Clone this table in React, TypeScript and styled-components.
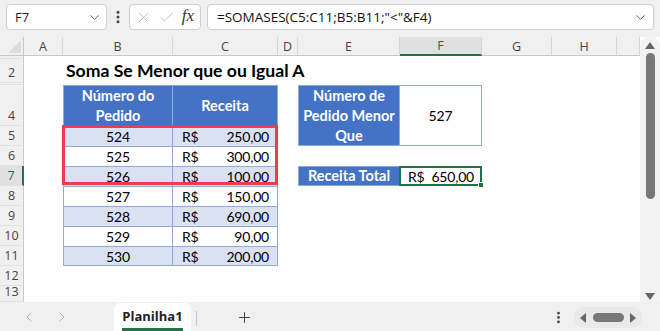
import React from "react";
import styled, { createGlobalStyle } from "styled-components";
import { Check, ChevronDown, ChevronLeft, ChevronRight, EllipsisVertical, Plus, X } from "lucide-react";

const GlobalStyle = createGlobalStyle`
  html, body {
    margin: 0;
    padding: 0;
    background: #f0f0f0;
  }
  * {
    box-sizing: border-box;
  }
`;

const UI_FONT = `"Open Sans", "Noto Sans", Arial, sans-serif`;
const CELL_FONT = `Lato, "Liberation Sans", Arial, sans-serif`;

const columns = ["A", "B", "C", "D", "E", "F", "G", "H", ""];
const rowNumbers = [1, 2, 3, 4, 5, 6, 7, 8, 9, 10, 11, 12, 13];
// rows 1 and 3 are too short to show their number
const tinyRows = [1, 3];

const orders = [
  { id: 524, value: "250,00" },
  { id: 525, value: "300,00" },
  { id: 526, value: "100,00" },
  { id: 527, value: "150,00" },
  { id: 528, value: "690,00" },
  { id: 529, value: "90,00" },
  { id: 530, value: "200,00" },
];

// sheet row n sits on grid row n + 1 (grid row 1 is the column header)
const gridRow = (n: number) => n + 1;

const App = () => {
  return (
    <Page>
      <GlobalStyle />

      <FormulaBar>
        <NameBox>
          <span>F7</span>
          <ChevronDown size={15} strokeWidth={1.5} color="#555" />
        </NameBox>
        <Kebab>
          <EllipsisVertical size={16} strokeWidth={2.5} color="#444" />
        </Kebab>
        <FnButtons>
          <X size={17} strokeWidth={1.2} color="#b4b4b4" />
          <Check size={17} strokeWidth={1.2} color="#b4b4b4" />
          <Fx>fx</Fx>
        </FnButtons>
        <FormulaInput>
          <span>=SOMASES(C5:C11;B5:B11;"&lt;"&amp;F4)</span>
          <ChevronDown size={15} strokeWidth={1.5} color="#555" />
        </FormulaInput>
      </FormulaBar>

      <SheetArea>
        <Grid>
          <Corner>
            <CornerMark />
          </Corner>
          {columns.map((c, i) => (
            <ColHeader key={i} $col={i + 2} $active={c === "F"}>
              {c}
            </ColHeader>
          ))}
          {rowNumbers.map((n) => (
            <RowHeader key={n} $row={gridRow(n)} $active={n === 7}>
              {tinyRows.includes(n) ? null : n}
            </RowHeader>
          ))}

          <Title $row={gridRow(2)}>Soma Se Menor que ou Igual A</Title>

          <HeadCell $col={3} $row={gridRow(4)} $first>
            Número do
            <br />
            Pedido
          </HeadCell>
          <HeadCell $col={4} $row={gridRow(4)}>
            Receita
          </HeadCell>

          {orders.map((o, i) => {
            const row = gridRow(5 + i);
            const shaded = i % 2 === 0;
            const last = i === orders.length - 1;
            return (
              <React.Fragment key={o.id}>
                <DataCell $col={3} $row={row} $shaded={shaded} $last={last} $first $center>
                  {o.id}
                </DataCell>
                <DataCell $col={4} $row={row} $shaded={shaded} $last={last}>
                  <Currency>R$</Currency>
                  <Amount>{o.value}</Amount>
                </DataCell>
              </React.Fragment>
            );
          })}

          <Highlight />

          <SideHead $row={gridRow(4)} $span={2}>
            Número de
            <br />
            Pedido Menor
            <br />
            Que
          </SideHead>
          <InputCell $row={gridRow(4)} $span={2}>
            527
          </InputCell>

          <SideHead $row={gridRow(7)} $span={1}>
            Receita Total
          </SideHead>
          <SelectedCell>
            <Currency>R$</Currency>
            <Amount>650,00</Amount>
            <FillHandle />
          </SelectedCell>
        </Grid>

        <VScroll>
          <ScrollArrow $up />
          <VThumb />
          <Spacer />
          <ScrollArrow />
        </VScroll>
      </SheetArea>

      <TabBar>
        <TabNav>
          <ChevronLeft size={16} strokeWidth={1.3} color="#a8a8a8" />
          <ChevronRight size={16} strokeWidth={1.3} color="#a8a8a8" />
        </TabNav>
        <SheetTab>
          <TabLabel>Planilha1</TabLabel>
        </SheetTab>
        <TabDivider />
        <AddSheet>
          <Plus size={17} strokeWidth={1.3} color="#333" />
        </AddSheet>
        <Spacer />
        <TabKebab>
          <EllipsisVertical size={15} strokeWidth={2.5} color="#444" />
        </TabKebab>
        <HScroll>
          <HArrow $left />
          <HThumb />
          <HArrow />
        </HScroll>
      </TabBar>
    </Page>
  );
};

export default App;

const Page = styled.div`
  width: 660px;
  height: 331px;
  display: flex;
  flex-direction: column;
  background: #f0f0f0;
  overflow: hidden;
  font-family: ${UI_FONT};
`;

const FormulaBar = styled.div`
  display: flex;
  align-items: center;
  height: 37px;
  padding: 4px 6px 7px 6px;
`;

const Field = styled.div`
  height: 26px;
  background: #fff;
  border: 1px solid #cfcfcf;
  border-radius: 4px;
  display: flex;
  align-items: center;
`;

const NameBox = styled(Field)`
  width: 101px;
  justify-content: space-between;
  padding: 0 4px 0 8px;
  font-size: 13px;
  color: #222;
`;

const Kebab = styled.div`
  width: 22px;
  display: flex;
  justify-content: center;
`;

const FnButtons = styled(Field)`
  width: 72px;
  gap: 4px;
  padding: 0 6px 0 5px;
  justify-content: space-between;
`;

const Fx = styled.span`
  font-family: "Liberation Serif", "DejaVu Serif", serif;
  font-style: italic;
  font-size: 17px;
  color: #333;
  padding-bottom: 2px;
`;

const FormulaInput = styled(Field)`
  flex: 1;
  margin-left: 6px;
  justify-content: space-between;
  padding: 0 5px 0 9px;
  font-size: 13.5px;
  color: #111;
`;

const SheetArea = styled.div`
  display: flex;
  height: 266px;
  background: #fff;
`;

const Grid = styled.div`
  width: 640px;
  display: grid;
  grid-template-columns: 24px 39px 110px 105px 20px 102px 82px 70px 65px 23px;
  grid-template-rows: 19px 3px 24px 2px 41px repeat(8, 20px) 16px;
  background: #fff;
  font-family: ${CELL_FONT};
  overflow: hidden;
`;

const Corner = styled.div`
  grid-column: 1;
  grid-row: 1;
  background: #f0f0f0;
  border-right: 1px solid #c8c8c8;
  border-bottom: 1px solid #c8c8c8;
  position: relative;
`;

const CornerMark = styled.div`
  position: absolute;
  right: 2px;
  bottom: 2px;
  width: 0;
  height: 0;
  border-left: 13px solid transparent;
  border-bottom: 13px solid #dcdcdc;
`;

const ColHeader = styled.div<{ $col: number; $active: boolean }>`
  grid-column: ${({ $col }) => $col};
  grid-row: 1;
  display: flex;
  align-items: center;
  justify-content: center;
  font-family: ${UI_FONT};
  font-size: 12.5px;
  color: ${({ $active }) => ($active ? "#1d6b3f" : "#444")};
  background: ${({ $active }) => ($active ? "#e0e0e0" : "#f0f0f0")};
  border-right: 1px solid #d6d6d6;
  border-bottom: ${({ $active }) => ($active ? "2px solid #217346" : "1px solid #c8c8c8")};
`;

const RowHeader = styled.div<{ $row: number; $active: boolean }>`
  grid-column: 1;
  grid-row: ${({ $row }) => $row};
  display: flex;
  align-items: flex-end;
  justify-content: center;
  overflow: hidden;
  font-family: ${UI_FONT};
  font-size: 12.5px;
  line-height: 18px;
  color: ${({ $active }) => ($active ? "#1d6b3f" : "#444")};
  background: ${({ $active }) => ($active ? "#e0e0e0" : "#f0f0f0")};
  border-right: ${({ $active }) => ($active ? "2px solid #217346" : "1px solid #c8c8c8")};
  border-bottom: 1px solid #e2e2e2;
`;

const Title = styled.div<{ $row: number }>`
  grid-column: 3 / 8;
  grid-row: ${({ $row }) => $row};
  display: flex;
  align-items: flex-end;
  padding: 0 0 2px 3px;
  font-size: 17.6px;
  font-weight: 700;
  color: #000;
  white-space: nowrap;
`;

const HeadCell = styled.div<{ $col: number; $row: number; $first?: boolean }>`
  grid-column: ${({ $col }) => $col};
  grid-row: ${({ $row }) => $row};
  display: flex;
  align-items: center;
  justify-content: center;
  text-align: center;
  background: #4472c4;
  color: #fff;
  font-size: 14.5px;
  font-weight: 700;
  line-height: 20px;
  border-top: 1px solid #8ea9db;
  border-right: 1px solid #8ea9db;
  border-left: ${({ $first }) => ($first ? "1px solid #8ea9db" : "none")};
`;

const DataCell = styled.div<{
  $col: number;
  $row: number;
  $shaded: boolean;
  $last: boolean;
  $first?: boolean;
  $center?: boolean;
}>`
  grid-column: ${({ $col }) => $col};
  grid-row: ${({ $row }) => $row};
  display: flex;
  align-items: center;
  justify-content: ${({ $center }) => ($center ? "center" : "space-between")};
  padding: ${({ $center }) => ($center ? "0" : "0 8px 0 8px")};
  background: ${({ $shaded }) => ($shaded ? "#d9e1f2" : "#fff")};
  font-size: 14px;
  letter-spacing: -0.2px;
  color: #000;
  border-top: 1px solid #8ea9db;
  border-right: 1px solid #8ea9db;
  border-left: ${({ $first }) => ($first ? "1px solid #8ea9db" : "none")};
  border-bottom: ${({ $last }) => ($last ? "1px solid #8ea9db" : "none")};
`;

const Currency = styled.span`
  padding-left: 1px;
`;

const Amount = styled.span`
  margin-left: auto;
`;

const Highlight = styled.div`
  grid-column: 3 / 5;
  grid-row: 6 / 9;
  border: 3px solid #ea3f48;
  margin: -1px 0 1px -1px;
  z-index: 2;
  pointer-events: none;
`;

const SideHead = styled.div<{ $row: number; $span: number }>`
  grid-column: 6;
  grid-row: ${({ $row, $span }) => `${$row} / span ${$span}`};
  display: flex;
  align-items: center;
  justify-content: center;
  text-align: center;
  background: #4472c4;
  color: #fff;
  font-size: 14.5px;
  font-weight: 700;
  line-height: 20px;
  border: 1px solid #8ea9db;
`;

const InputCell = styled.div<{ $row: number; $span: number }>`
  grid-column: 7;
  grid-row: ${({ $row, $span }) => `${$row} / span ${$span}`};
  display: flex;
  align-items: center;
  justify-content: center;
  font-size: 14px;
  letter-spacing: -0.2px;
  color: #000;
  border: 1px solid #8ea9db;
  border-left: none;
`;

const SelectedCell = styled.div`
  grid-column: 7;
  grid-row: 8;
  display: flex;
  align-items: center;
  padding: 0 6px 0 6px;
  font-size: 14px;
  letter-spacing: -0.2px;
  color: #000;
  border: 2px solid #217346;
  margin-left: -1px;
  position: relative;
`;

const FillHandle = styled.div`
  position: absolute;
  right: -4px;
  bottom: -4px;
  width: 6px;
  height: 6px;
  background: #217346;
  border: 1px solid #fff;
`;

const VScroll = styled.div`
  width: 20px;
  display: flex;
  flex-direction: column;
  align-items: center;
  background: #f3f3f3;
  border-radius: 8px 8px 0 0;
  padding: 5px 0 2px;
`;

const ScrollArrow = styled.div<{ $up?: boolean }>`
  width: 0;
  height: 0;
  border-left: 5px solid transparent;
  border-right: 5px solid transparent;
  ${({ $up }) => ($up ? "border-bottom: 7px solid #666;" : "border-top: 7px solid #666;")}
`;

const VThumb = styled.div`
  width: 9px;
  height: 146px;
  margin-top: 4px;
  border-radius: 5px;
  background: #787878;
`;

const Spacer = styled.div`
  flex: 1;
`;

const TabBar = styled.div`
  height: 28px;
  margin-top: 1px;
  display: flex;
  align-items: stretch;
  padding-right: 18px;
`;

const TabNav = styled.div`
  width: 114px;
  display: flex;
  align-items: center;
  gap: 17px;
  padding-left: 21px;
`;

const SheetTab = styled.div`
  width: 77px;
  background: #fff;
  border-radius: 6px 6px 0 0;
  display: flex;
  justify-content: center;
`;

const TabLabel = styled.div`
  height: 100%;
  display: flex;
  align-items: center;
  font-size: 13px;
  font-weight: 700;
  color: #222;
  padding-top: 1px;
  border-bottom: 3px solid #217346;
  margin-bottom: 4px;
  line-height: 1;
`;

const TabDivider = styled.div`
  width: 1px;
  margin: 8px 0 5px 5px;
  background: #c4c4c4;
`;

const AddSheet = styled.div`
  width: 94px;
  display: flex;
  align-items: center;
  justify-content: center;
`;

const TabKebab = styled.div`
  width: 16px;
  display: flex;
  align-items: center;
  justify-content: center;
  margin-right: 8px;
`;

const HScroll = styled.div`
  width: 68px;
  margin: 4px 0 3px;
  border-radius: 11px;
  background: #e9e9e9;
  display: flex;
  align-items: center;
  justify-content: space-between;
  padding: 0 6px;
`;

const HArrow = styled.div<{ $left?: boolean }>`
  width: 0;
  height: 0;
  border-top: 5px solid transparent;
  border-bottom: 5px solid transparent;
  ${({ $left }) => ($left ? "border-right: 6px solid #666;" : "border-left: 6px solid #666;")}
`;

const HThumb = styled.div`
  width: 31px;
  height: 9px;
  border-radius: 5px;
  background: #787878;
`;
